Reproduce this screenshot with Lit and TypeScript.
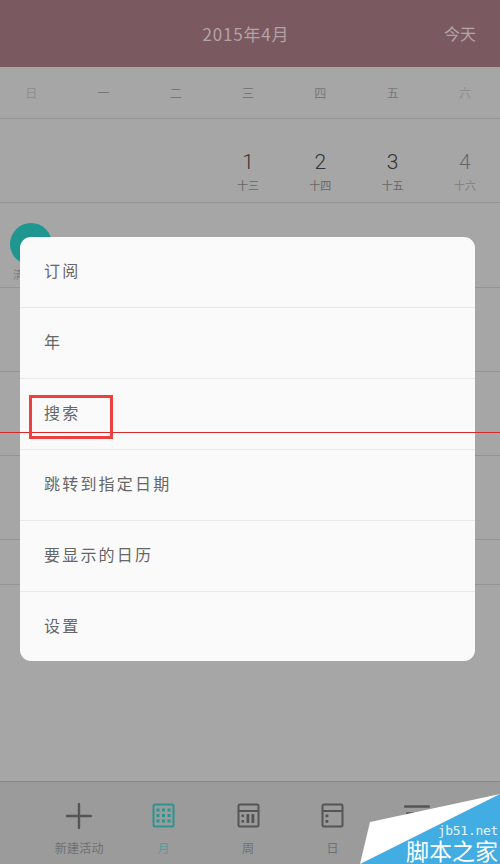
import { LitElement, html, css, svg } from "lit";
import { customElement } from "lit/decorators.js";

@customElement("app-root")
export class AppRoot extends LitElement {
  static styles = css`
    :host { display: block; width: 500px; height: 864px; font-family: "Noto Sans CJK SC", "Liberation Sans", sans-serif; }
    .page { position: relative; width: 500px; height: 864px; overflow: hidden; background: #a6a6a6; display: flex; flex-direction: column; }
    .header { height: 67px; flex: none; background: #7a5a60; display: flex; align-items: center; justify-content: center; position: relative; color: #b3a2a6; font-size: 17px; letter-spacing: 0.8px; padding-right: 8px; box-sizing: border-box; }
    .today { position: absolute; right: 24px; top: 22px; font-size: 16px; line-height: 23px; letter-spacing: 0; }
    .week, .dates { flex: none; display: grid; grid-template-columns: repeat(7, 72.3px); justify-items: center; margin-left: -5px; box-sizing: border-box; }
    .week { height: 51px; align-items: center; font-size: 12px; color: #777; }
    .week .dim { color: #8e8e8e; }
    .dates { height: 83px; padding-top: 30px; }
    .rule { height: 1px; flex: none; background: #939393; }
    .date { display: flex; flex-direction: column; align-items: center; color: #333; font-size: 21px; line-height: 26px; font-weight: 300; font-family: Roboto, "Liberation Sans", sans-serif; }
    .date small { font: 11px/14px "Noto Sans CJK SC", sans-serif; color: #666; margin-top: 3px; }
    .date.dim { color: #666; }
    .date.dim small { color: #808080; }
    .row { flex: none; box-sizing: border-box; border-bottom: 1px solid #939393; position: relative; }
    .r1 { height: 85px; }
    .r2, .r3, .r4 { height: 84px; }
    .r5 { height: 45px; }
    .fill { flex: 1; }
    .dot { position: absolute; left: 10px; top: 20px; width: 42px; height: 42px; border-radius: 50%; background: #1f9690; }
    .dot-label { position: absolute; left: 13px; top: 64px; font-size: 11px; line-height: 14px; color: #7d7d7d; }
    .nav { height: 83px; flex: none; box-sizing: border-box; border-top: 1px solid #868686; background: #9b9b9b; display: grid; grid-template-columns: repeat(5, 84.5px); padding-left: 37px; justify-items: center; }
    .tab { display: flex; flex-direction: column; align-items: center; font-size: 12px; line-height: 14px; letter-spacing: 0.3px; padding-top: 21px; color: #707070; }
    .tab svg { display: block; height: 26px; margin-bottom: 12px; }
    .tab svg.wide { width: 26px; }
    .tab svg.box { width: 23px; }
    .tab.on { color: #579c9a; }
    .menu { position: absolute; left: 20px; top: 237px; width: 455px; height: 424px; background: #fafafa; border-radius: 11px; display: flex; flex-direction: column; overflow: hidden; }
    .item { height: 71px; flex: none; box-sizing: border-box; border-bottom: 1px solid #e8e8e8; display: flex; align-items: center; padding: 0 0 5px 24px; font-size: 16px; letter-spacing: 2.2px; color: #666; }
    .item:last-child { border-bottom: none; }
    .redbox { position: absolute; left: 29px; top: 395px; width: 84px; height: 44px; box-sizing: border-box; border: 3px solid #ef4040; }
    .redline { position: absolute; left: 0; top: 432px; width: 500px; height: 1px; background: #d9282c; }
    .mark { position: absolute; right: 0; bottom: 0; width: 140px; height: 70px; }
    .mark svg { display: block; position: absolute; inset: 0; }
    .mark .net { position: absolute; right: 2px; top: 29px; font: 13px/15px "DejaVu Sans Mono", monospace; letter-spacing: -0.3px; color: #e6f4fb; }
    .mark .jia { position: absolute; right: 2px; top: 44px; font-size: 23px; line-height: 25px; color: #fff; white-space: nowrap; }
  `;

  private icon(kind: string) {
    const c = kind === "month" ? "#2a9590" : "#555";
    if (kind === "plus") {
      return html`<svg class="wide" viewBox="0 0 26 26"><path d="M13 1v24M1 13h24" stroke=${c} stroke-width="2.4" fill="none" stroke-linecap="round"/></svg>`;
    }
    if (kind === "list") {
      return html`<svg class="wide" viewBox="0 0 26 26"><path d="M1 3.5h24" stroke=${c} stroke-width="2.4" stroke-linecap="round"/><path d="M2 10.5h8" stroke=${c} stroke-width="2.4"/></svg>`;
    }
    let inner = svg``;
    if (kind === "month") {
      const dots = [];
      for (const y of [7, 12.5, 18]) for (const x of [6, 11.5, 17]) dots.push(svg`<rect x=${x - 1.5} y=${y - 1.5} width="3" height="3" fill=${c}/>`);
      inner = svg`${dots}`;
    }
    if (kind === "week") {
      inner = svg`<path d="M2 8h19" stroke=${c} stroke-width="2"/><rect x="4.5" y="11.5" width="2.6" height="2.6" fill=${c}/><rect x="4.5" y="17" width="2.6" height="2.6" fill=${c}/><rect x="9.5" y="11" width="2.8" height="9" fill=${c}/><rect x="14.5" y="11" width="2.8" height="9" fill=${c}/>`;
    }
    if (kind === "day") {
      inner = svg`<path d="M2 8h19" stroke=${c} stroke-width="2"/><rect x="4.5" y="11.5" width="2.8" height="2.8" fill=${c}/><rect x="4.5" y="17" width="2.8" height="2.8" fill=${c}/>`;
    }
    return html`<svg class="box" viewBox="0 0 23 26"><rect x="1.5" y="1.5" width="20" height="22" rx="1.5" fill="none" stroke=${c} stroke-width="2"/>${inner}</svg>`;
  }

  render() {
    const week = ["日", "一", "二", "三", "四", "五", "六"];
    const dates = [["1", "十三"], ["2", "十四"], ["3", "十五"], ["4", "十六"]];
    const items = ["订阅", "年", "搜索", "跳转到指定日期", "要显示的日历", "设置"];
    const tabs: [string, string][] = [["plus", "新建活动"], ["month", "月"], ["week", "周"], ["day", "日"], ["list", ""]];
    return html`
      <div class="page">
        <div class="header">2015年4月<span class="today">今天</span></div>
        <div class="week">
          ${week.map((d, i) => html`<span class=${i === 0 || i === 6 ? "dim" : ""}>${d}</span>`)}
        </div>
        <div class="rule"></div>
        <div class="dates">
          <span></span><span></span><span></span>
          ${dates.map((d, i) => html`<div class="date ${i === 3 ? "dim" : ""}">${d[0]}<small>${d[1]}</small></div>`)}
        </div>
        <div class="rule"></div>
        <div class="row r1"><div class="dot"></div><div class="dot-label">清</div></div>
        <div class="row r2"></div>
        <div class="row r3"></div>
        <div class="row r4"></div>
        <div class="row r5"></div>
        <div class="fill"></div>
        <div class="nav">
          ${tabs.map(([k, l]) => html`<div class="tab ${k === "month" ? "on" : ""}">${this.icon(k)}<span>${l}</span></div>`)}
        </div>
        <div class="menu">
          ${items.map((t) => html`<div class="item">${t}</div>`)}
        </div>
        <div class="redline"></div>
        <div class="redbox"></div>
        <div class="mark">
          <svg viewBox="0 0 140 70">
            <polygon points="0,70 140,0 140,70" fill="#41ade3"/>
            <polygon points="10,28 140,0 0,70" fill="#fff"/>
          </svg>
          <span class="net">jb51.net</span>
          <span class="jia">脚本之家</span>
        </div>
      </div>
    `;
  }
}
